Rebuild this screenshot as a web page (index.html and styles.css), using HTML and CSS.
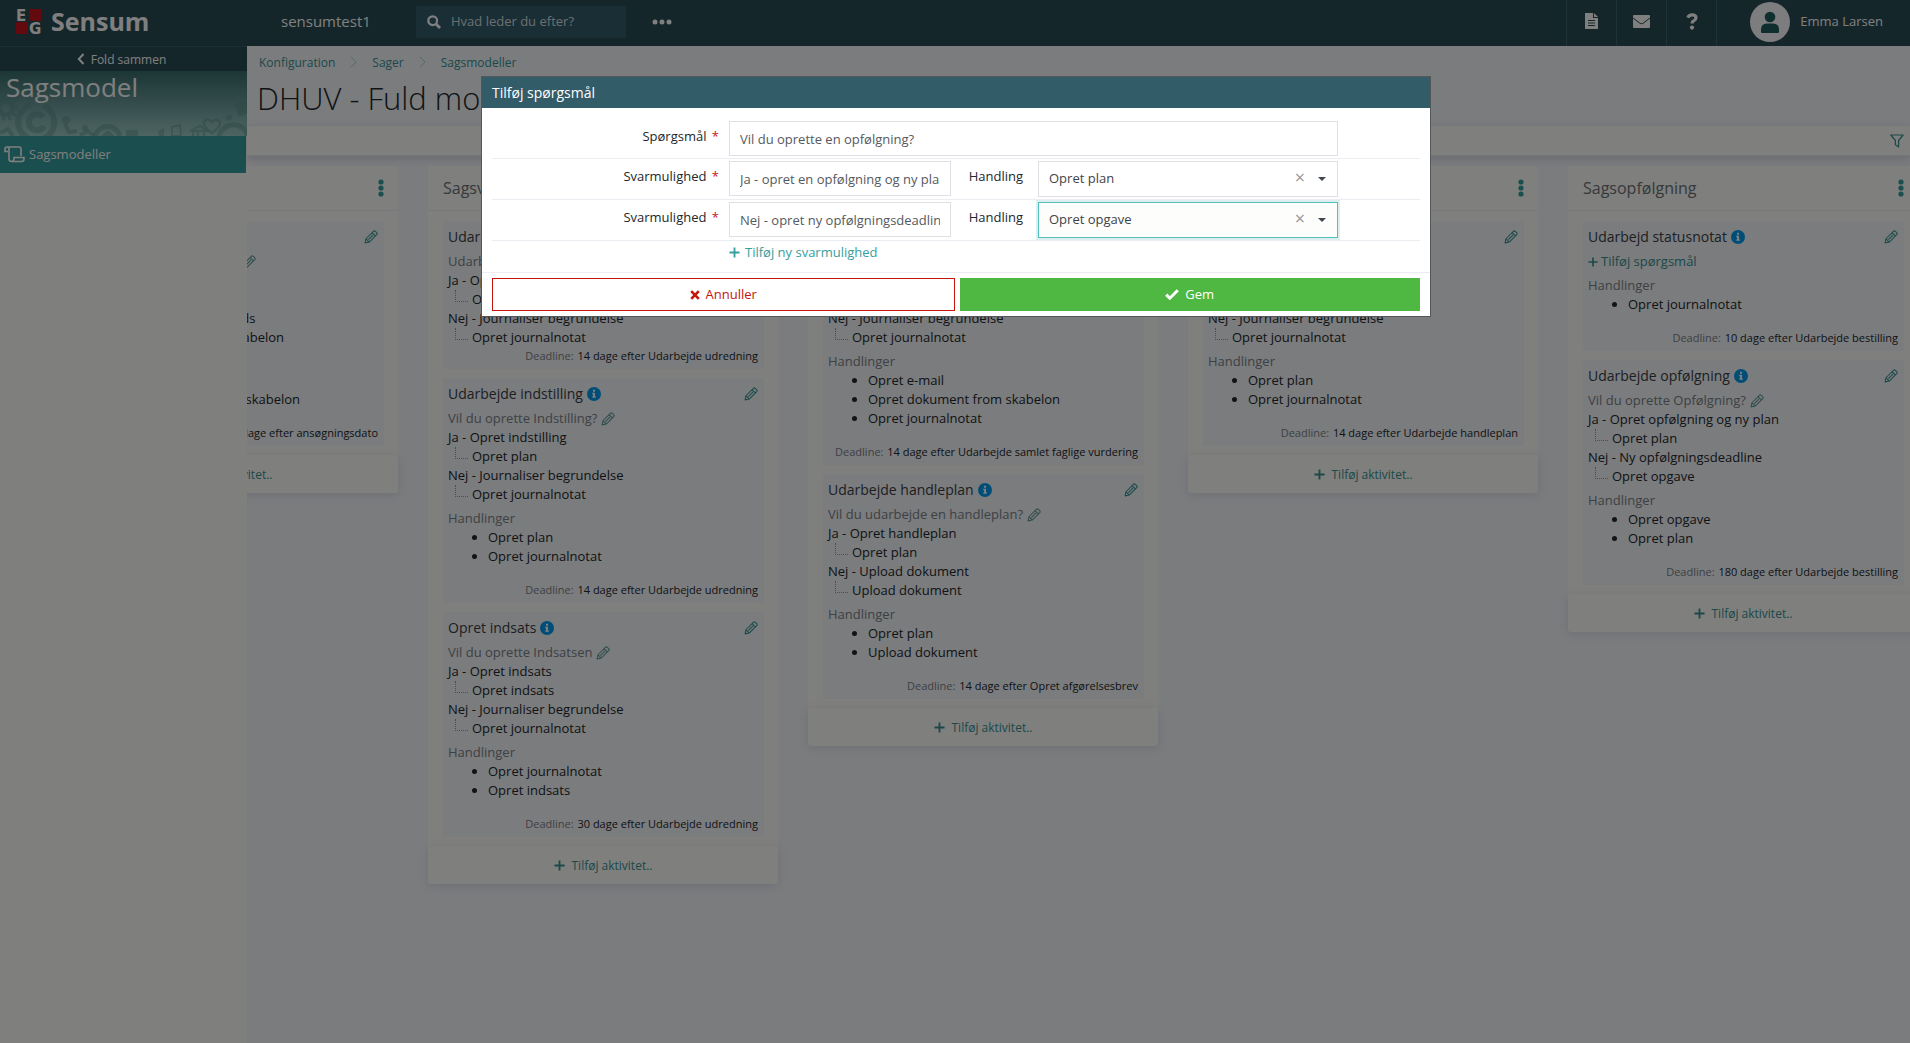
FILE: index.html
```html
<!DOCTYPE html>
<html lang="da">

<head>
    <meta charset="UTF-8">
    <meta name="viewport" content="width=device-width, initial-scale=1.0">
    <title>Sensum - Sagsmodel</title>
    <link rel="stylesheet" href="styles.css">
</head>

<body>
    <svg class="symbols" aria-hidden="true">
        <symbol id="pencil" viewBox="0 0 16 16">
            <path d="M1.3 14.7l.9-4.7 8.5-8.5a1.6 1.6 0 0 1 2.2 0l1.6 1.6a1.6 1.6 0 0 1 0 2.2L6 13.8zM9.2 3l3.8 3.8M2.4 10.2l3.4 3.4M5 11l5.4-5.4" fill="none" stroke="currentColor" stroke-width="1.2" stroke-linejoin="round" />
        </symbol>
        <symbol id="info" viewBox="0 0 16 16">
            <circle cx="8" cy="8" r="8" fill="#009bf0" />
            <path d="M6.9 3.2h2.3v2.2H6.9zM6 6.6h3.2v4.2h.9v1.6H6v-1.6h.9V8.2H6z" fill="#fff" />
        </symbol>
        <symbol id="plus" viewBox="0 0 12 12">
            <path d="M6 .5v11M.5 6h11" fill="none" stroke="currentColor" stroke-width="2" />
        </symbol>
        <symbol id="dots" viewBox="0 0 6 18">
            <circle cx="3" cy="3" r="2.6" /><circle cx="3" cy="9" r="2.6" /><circle cx="3" cy="15" r="2.6" />
        </symbol>
        <symbol id="chevron" viewBox="0 0 8 14">
            <path d="M1 1l6 6-6 6" fill="none" stroke="currentColor" />
        </symbol>
    </svg>

    <header class="topbar">
        <a href="#" class="brand">
            <svg class="brand-logo" viewBox="0 0 25 25" aria-hidden="true">
                <rect x="13" width="12" height="12" rx="1" fill="#c4141c" />
                <rect y="13" width="12" height="12" rx="1" fill="#c4141c" />
                <text x="0" y="12">E</text>
                <text x="13" y="25">G</text>
            </svg>
            Sensum
        </a>
        <span class="tenant">sensumtest1</span>
        <label class="search">
            <svg viewBox="0 0 14 14" aria-hidden="true"><circle cx="5.7" cy="5.7" r="4.4" fill="none" stroke="currentColor" stroke-width="2.2" /><path d="M9 9l4 4" stroke="currentColor" stroke-width="2.8" /></svg>
            <input type="search" placeholder="Hvad leder du efter?" aria-label="Søg">
        </label>
        <button class="more" aria-label="Mere">
            <svg viewBox="0 0 20 6" aria-hidden="true"><circle cx="3" cy="3" r="2.5" /><circle cx="10" cy="3" r="2.5" /><circle cx="17" cy="3" r="2.5" /></svg>
        </button>
        <nav class="tools">
            <a href="#" aria-label="Dokumenter">
                <svg width="13" height="16" viewBox="0 0 13 16"><path d="M0 0h8v5h5v11H0zM9 0l4 4H9z" fill="currentColor" /><path d="M3 7.5h7M3 10h7M3 12.5h7" stroke="#2a4c54" /></svg>
            </a>
            <a href="#" aria-label="Beskeder">
                <svg width="17" height="13" viewBox="0 0 17 13"><rect width="17" height="13" rx="1" fill="currentColor" /><path d="M0 3l7 5.3q1.5 1 3 0L17 3" fill="none" stroke="#2a4c54" /></svg>
            </a>
            <a href="#" aria-label="Hjælp">
                <svg width="12" height="17" viewBox="0 0 12 17"><path d="M1.8 4.6Q3 1.8 6 1.8q4 0 4 3 0 1.7-2 2.8-2 1-2 3" fill="none" stroke="currentColor" stroke-width="3.2" /><circle cx="6" cy="14.6" r="2.1" fill="currentColor" /></svg>
            </a>
        </nav>
        <a href="#" class="user">
            <svg class="avatar" viewBox="0 0 40 40" aria-hidden="true">
                <circle cx="20" cy="20" r="20" fill="#fbfbff" />
                <circle cx="20" cy="15" r="5.3" fill="#1f5f5d" />
                <path d="M11 30v-2.500q0-6 6-6h6q6 0 6 6V30q0 1-1 1H12q-1 0-1-1z" fill="#1f5f5d" />
            </svg>
            Emma Larsen
        </a>
    </header>

    <div class="layout">
        <aside class="sidebar">
            <button class="fold">
                <svg width="8" height="12" viewBox="0 0 8 12" aria-hidden="true"><path d="M6.500 1L1.800 6l4.700 5" fill="none" stroke="currentColor" stroke-width="2" /></svg>
                Fold sammen
            </button>
            <div class="banner">
                <svg class="banner-art" viewBox="0 0 247 65" preserveAspectRatio="xMinYMax slice" aria-hidden="true">
                    <g fill="none" stroke="#568d88" stroke-opacity=".4">
                        <circle cx="6" cy="37" r="7" stroke-width="5" />
                        <circle cx="6" cy="37" r="11" stroke-width="3" stroke-dasharray="3 3" />
                        <circle cx="1" cy="21" r="2" stroke-width="1" />
                        <path d="M44 35a18 18 0 1 1-13-1M43 46a8 8 0 1 0 1 9" stroke-width="6" />
                        <path d="M0 62l8-4 5 7M65 53l4 8 8-1M80 64l8-4 6 5" stroke-width="4" />
                        <path d="M95 65a13 13 0 0 1 25 0" stroke-width="5" />
                        <path d="M219 65a15 15 0 0 1 29 0" stroke-width="5" />
                        <path d="M212 62q-9-6-8-11 3-5 8 0 5-5 8 0 1 5-8 11z" stroke-width="2.500" />
                        <path d="M190 60l10-5 7 5zM193 61v4M198 61v4M204 61v4M172 56l8-2 1 11h-9z" stroke-width="2" />
                    </g>
                    <g fill="#568d88" fill-opacity=".4">
                        <circle cx="66" cy="49" r="4" /><circle cx="85" cy="57" r="3" />
                        <path d="M126 59h12v6h-12zM234 33l13-4v14l-8 3zM225 46l6-3 1 5-5 2zM158 60l6-3v8h-5zM101 65l7-6 7 6z" />
                    </g>
                </svg>
                <h2>Sagsmodel</h2>
            </div>
            <a href="#" class="nav-item">
                <svg width="21" height="17" viewBox="0 0 21 17" aria-hidden="true"><path d="M4 5.500H1V3a2 2 0 0 1 2-2h12q2 0 2 2v7M3 1q2 0 2 2v10q0 2.500 3 2.500h9.500q2.500 0 2.500-2.500v-1.500H10V13q0 2-2 2.500" fill="none" stroke="currentColor" stroke-width="1.600" /></svg>
                Sagsmodeller
            </a>
        </aside>

        <main class="content">
            <nav class="breadcrumb">
                <a href="#">Konfiguration</a>
                <svg><use href="#chevron" /></svg>
                <a href="#">Sager</a>
                <svg><use href="#chevron" /></svg>
                <a href="#">Sagsmodeller</a>
            </nav>
            <h1>DHUV - Fuld model</h1>
            <div class="filterbar">
                <button aria-label="Filter">
                    <svg width="14" height="14" viewBox="0 0 14 14"><path d="M.8 1h12.400L8.600 6.500V13L5.400 10.800V6.500z" fill="none" stroke="currentColor" stroke-width="1.200" stroke-linejoin="round" /></svg>
                </button>
            </div>

            <div class="board">
                <section class="column">
                    <header><h2>Sagsåbning</h2><button class="menu" aria-label="Menu"><svg><use href="#dots" /></svg></button></header>
                    <article class="card">
                        <h3>Ansøgning <svg><use href="#info" /></svg><button class="edit" aria-label="Rediger"><svg><use href="#pencil" /></svg></button></h3>
                        <p class="question">Vil du oprette Ansøgningen? <svg><use href="#pencil" /></svg></p>
                        <dl>
                            <dt>Ja - Opret ansøgning</dt>
                            <dd>Opret plan</dd>
                            <dt>Nej - Journaliser afslag til fonds</dt>
                            <dd>Opret dokument from skabelon</dd>
                        </dl>
                        <h4>Handlinger</h4>
                        <ul>
                            <li>Opret plan</li>
                            <li>Opret dokument from skabelon</li>
                        </ul>
                        <p class="deadline"><span>Deadline:</span> 14 dage efter ansøgningsdato</p>
                    </article>
                    <button class="add"><svg><use href="#plus" /></svg>Tilføj aktivitet..</button>
                </section>

                <section class="column">
                    <header><h2>Sagsvurdering</h2><button class="menu" aria-label="Menu"><svg><use href="#dots" /></svg></button></header>
                    <article class="card">
                        <h3>Udarbejde udredning <svg><use href="#info" /></svg><button class="edit" aria-label="Rediger"><svg><use href="#pencil" /></svg></button></h3>
                        <p class="question">Udarbejde udredning? <svg><use href="#pencil" /></svg></p>
                        <dl>
                            <dt>Ja - Opret udredning</dt>
                            <dd>Opret plan</dd>
                            <dt>Nej - Journaliser begrundelse</dt>
                            <dd>Opret journalnotat</dd>
                        </dl>
                        <p class="deadline"><span>Deadline:</span> 14 dage efter Udarbejde udredning</p>
                    </article>
                    <article class="card">
                        <h3>Udarbejde indstilling <svg><use href="#info" /></svg><button class="edit" aria-label="Rediger"><svg><use href="#pencil" /></svg></button></h3>
                        <p class="question">Vil du oprette Indstilling? <svg><use href="#pencil" /></svg></p>
                        <dl>
                            <dt>Ja - Opret indstilling</dt>
                            <dd>Opret plan</dd>
                            <dt>Nej - Journaliser begrundelse</dt>
                            <dd>Opret journalnotat</dd>
                        </dl>
                        <h4>Handlinger</h4>
                        <ul>
                            <li>Opret plan</li>
                            <li>Opret journalnotat</li>
                        </ul>
                        <p class="deadline"><span>Deadline:</span> 14 dage efter Udarbejde udredning</p>
                    </article>
                    <article class="card">
                        <h3>Opret indsats <svg><use href="#info" /></svg><button class="edit" aria-label="Rediger"><svg><use href="#pencil" /></svg></button></h3>
                        <p class="question">Vil du oprette Indsatsen <svg><use href="#pencil" /></svg></p>
                        <dl>
                            <dt>Ja - Opret indsats</dt>
                            <dd>Opret indsats</dd>
                            <dt>Nej - Journaliser begrundelse</dt>
                            <dd>Opret journalnotat</dd>
                        </dl>
                        <h4>Handlinger</h4>
                        <ul>
                            <li>Opret journalnotat</li>
                            <li>Opret indsats</li>
                        </ul>
                        <p class="deadline"><span>Deadline:</span> 30 dage efter Udarbejde udredning</p>
                    </article>
                    <button class="add"><svg><use href="#plus" /></svg>Tilføj aktivitet..</button>
                </section>

                <section class="column">
                    <header><h2>Afgørelse</h2><button class="menu" aria-label="Menu"><svg><use href="#dots" /></svg></button></header>
                    <article class="card">
                        <h3>Opret afgørelsesbrev <svg><use href="#info" /></svg><button class="edit" aria-label="Rediger"><svg><use href="#pencil" /></svg></button></h3>
                        <p class="question">Vil du oprette afgørelse? <svg><use href="#pencil" /></svg></p>
                        <dl>
                            <dt>Ja - Opret afgørelse</dt>
                            <dd>Opret plan</dd>
                            <dt>Nej - Journaliser begrundelse</dt>
                            <dd>Opret journalnotat</dd>
                        </dl>
                        <h4>Handlinger</h4>
                        <ul>
                            <li>Opret e-mail</li>
                            <li>Opret dokument from skabelon</li>
                            <li>Opret journalnotat</li>
                        </ul>
                        <p class="deadline"><span>Deadline:</span> 14 dage efter Udarbejde samlet faglige vurdering</p>
                    </article>
                    <article class="card">
                        <h3>Udarbejde handleplan <svg><use href="#info" /></svg><button class="edit" aria-label="Rediger"><svg><use href="#pencil" /></svg></button></h3>
                        <p class="question">Vil du udarbejde en handleplan? <svg><use href="#pencil" /></svg></p>
                        <dl>
                            <dt>Ja - Opret handleplan</dt>
                            <dd>Opret plan</dd>
                            <dt>Nej - Upload dokument</dt>
                            <dd>Upload dokument</dd>
                        </dl>
                        <h4>Handlinger</h4>
                        <ul>
                            <li>Opret plan</li>
                            <li>Upload dokument</li>
                        </ul>
                        <p class="deadline"><span>Deadline:</span> 14 dage efter Opret afgørelsesbrev</p>
                    </article>
                    <button class="add"><svg><use href="#plus" /></svg>Tilføj aktivitet..</button>
                </section>

                <section class="column">
                    <header><h2>Bestilling</h2><button class="menu" aria-label="Menu"><svg><use href="#dots" /></svg></button></header>
                    <article class="card">
                        <h3>Udarbejde bestilling <svg><use href="#info" /></svg><button class="edit" aria-label="Rediger"><svg><use href="#pencil" /></svg></button></h3>
                        <p class="question">Vil du oprette bestilling? <svg><use href="#pencil" /></svg></p>
                        <dl>
                            <dt>Ja - Opret bestilling</dt>
                            <dd>Opret plan</dd>
                            <dt>Nej - Journaliser begrundelse</dt>
                            <dd>Opret journalnotat</dd>
                        </dl>
                        <h4>Handlinger</h4>
                        <ul>
                            <li>Opret plan</li>
                            <li>Opret journalnotat</li>
                        </ul>
                        <p class="deadline"><span>Deadline:</span> 14 dage efter Udarbejde handleplan</p>
                    </article>
                    <button class="add"><svg><use href="#plus" /></svg>Tilføj aktivitet..</button>
                </section>

                <section class="column">
                    <header><h2>Sagsopfølgning</h2><button class="menu" aria-label="Menu"><svg><use href="#dots" /></svg></button></header>
                    <article class="card">
                        <h3>Udarbejd statusnotat <svg><use href="#info" /></svg><button class="edit" aria-label="Rediger"><svg><use href="#pencil" /></svg></button></h3>
                        <button class="add-question"><svg><use href="#plus" /></svg>Tilføj spørgsmål</button>
                        <h4>Handlinger</h4>
                        <ul>
                            <li>Opret journalnotat</li>
                        </ul>
                        <p class="deadline"><span>Deadline:</span> 10 dage efter Udarbejde bestilling</p>
                    </article>
                    <article class="card">
                        <h3>Udarbejde opfølgning <svg><use href="#info" /></svg><button class="edit" aria-label="Rediger"><svg><use href="#pencil" /></svg></button></h3>
                        <p class="question">Vil du oprette Opfølgning? <svg><use href="#pencil" /></svg></p>
                        <dl>
                            <dt>Ja - Opret opfølgning og ny plan</dt>
                            <dd>Opret plan</dd>
                            <dt>Nej - Ny opfølgningsdeadline</dt>
                            <dd>Opret opgave</dd>
                        </dl>
                        <h4>Handlinger</h4>
                        <ul>
                            <li>Opret opgave</li>
                            <li>Opret plan</li>
                        </ul>
                        <p class="deadline"><span>Deadline:</span> 180 dage efter Udarbejde bestilling</p>
                    </article>
                    <button class="add"><svg><use href="#plus" /></svg>Tilføj aktivitet..</button>
                </section>
            </div>
        </main>
    </div>

    <div class="backdrop">
        <form class="modal" role="dialog" aria-labelledby="modal-title">
            <h2 id="modal-title">Tilføj spørgsmål</h2>
            <div class="modal-body">
                <div class="form-row">
                    <label for="question">Spørgsmål <b>*</b></label>
                    <input id="question" class="wide" type="text" value="Vil du oprette en opfølgning?">
                </div>
                <div class="form-row">
                    <label for="answer1">Svarmulighed <b>*</b></label>
                    <input id="answer1" type="text" value="Ja - opret en opfølgning og ny plan">
                    <label for="action1">Handling</label>
                    <div class="select">
                        <select id="action1"><option>Opret plan</option><option>Opret opgave</option></select>
                        <button type="button" class="clear" aria-label="Ryd">×</button>
                    </div>
                </div>
                <div class="form-row">
                    <label for="answer2">Svarmulighed <b>*</b></label>
                    <input id="answer2" type="text" value="Nej - opret ny opfølgningsdeadline">
                    <label for="action2">Handling</label>
                    <div class="select active">
                        <select id="action2"><option>Opret opgave</option><option>Opret plan</option></select>
                        <button type="button" class="clear" aria-label="Ryd">×</button>
                    </div>
                </div>
                <div class="form-row">
                    <button type="button" class="add-answer"><svg><use href="#plus" /></svg>Tilføj ny svarmulighed</button>
                </div>
            </div>
            <div class="modal-footer">
                <button type="button" class="cancel"><svg width="10" height="10" viewBox="0 0 10 10" aria-hidden="true"><path d="M1.200 1.200l7.600 7.600M8.800 1.200L1.200 8.800" stroke="currentColor" stroke-width="2.600" /></svg>Annuller</button>
                <button type="submit" class="save"><svg width="14" height="11" viewBox="0 0 14 11" aria-hidden="true"><path d="M1.200 5.600l3.600 3.600 8-8" fill="none" stroke="currentColor" stroke-width="3" /></svg>Gem</button>
            </div>
        </form>
    </div>

    <script>
        // start with the last column in view
        const board = document.querySelector('.board');
        board.scrollLeft = 214;
    </script>
</body>

</html>
```
FILE: styles.css
```css
* {
    box-sizing: border-box;
}

body {
    display: flex;
    flex-direction: column;
    min-height: 100vh;
    margin: 0;
    font-family: "Open Sans", sans-serif;
    font-size: 13px;
    line-height: 19px;
    color: #22272b;
    background: #f6f8fc;
}

h1, h2, h3, h4, p, ul, dl, dd {
    margin: 0;
    padding: 0;
    font-weight: 400;
}

a {
    color: inherit;
    text-decoration: none;
}

button {
    padding: 0;
    border: 0;
    background: none;
    font: inherit;
    color: inherit;
    cursor: pointer;
}

input, select {
    font: inherit;
}

svg {
    flex: none;
}

.symbols {
    display: none;
}

/* top bar */

.topbar {
    display: flex;
    align-items: center;
    height: 46px;
    padding-bottom: 3px;
    background: #2a4c54;
    color: #fff;
}

.brand {
    display: flex;
    align-items: center;
    gap: 10px;
    width: 281px;
    padding-left: 16px;
    font-size: 25px;
    font-weight: 700;
}

.brand-logo {
    width: 25px;
    height: 25px;
    overflow: visible;
    fill: #fff;
    font-family: "DejaVu Sans", sans-serif;
    font-size: 15px;
}

.tenant {
    width: 135px;
    font-size: 15px;
}

.search {
    display: flex;
    align-items: center;
    gap: 10px;
    width: 210px;
    height: 32px;
    padding: 0 11px;
    background: #355c6a;
}

.search svg {
    width: 14px;
    height: 14px;
}

.search input {
    flex: 1;
    min-width: 0;
    border: 0;
    background: none;
    color: #fff;
    outline: 0;
    padding: 0;
}

.search input::placeholder {
    color: #d5dfe2;
}

.more {
    display: flex;
    margin-left: 26px;
}

.more svg {
    width: 20px;
    height: 6px;
    fill: currentColor;
}

.tools {
    display: flex;
    align-self: stretch;
    margin: 0 0 -3px auto;
    border-right: 1px solid #3a6373;
}

.tools a {
    display: flex;
    align-items: center;
    justify-content: center;
    width: 50px;
    padding-bottom: 4px;
    border-left: 1px solid #3a6373;
}

.user {
    display: flex;
    align-items: center;
    gap: 10px;
    padding: 0 27px 0 33px;
    white-space: nowrap;
}

.avatar {
    width: 40px;
    height: 40px;
}

/* sidebar */

.layout {
    display: flex;
    flex: 1;
}

.sidebar {
    width: 247px;
    flex: none;
    background: #fffefa;
}

.fold {
    display: flex;
    align-items: center;
    justify-content: center;
    gap: 6px;
    width: 100%;
    height: 25px;
    padding-right: 4px;
    border-top: 1px solid #355c6a;
    background: #2a4c54;
    color: #fff;
    font-size: 12px;
}

.banner {
    position: relative;
    height: 65px;
    background: linear-gradient(#386d6d, #9bc9c4);
    color: #fff;
}

.banner-art {
    position: absolute;
    inset: 0;
    width: 100%;
    height: 100%;
}

.banner h2 {
    position: relative;
    padding-left: 6px;
    font-size: 26px;
    line-height: 32px;
}

.nav-item {
    display: flex;
    align-items: center;
    gap: 4px;
    height: 37px;
    margin-right: 1px;
    padding-left: 4px;
    background: #379d9d;
    color: #fff;
}

/* page head */

.content {
    flex: 1;
    min-width: 0;
}

.breadcrumb {
    display: flex;
    align-items: center;
    height: 32px;
    padding-left: 12px;
    font-size: 12px;
    color: #379393;
}

.breadcrumb svg {
    width: 7px;
    height: 12px;
    margin: 0 15px;
    color: #9bcccc;
}

h1 {
    padding-left: 10px;
    font-size: 31px;
    font-weight: 300;
    line-height: 40px;
    height: 47px;
}

.filterbar {
    position: relative;
    display: flex;
    align-items: center;
    justify-content: flex-end;
    height: 31px;
    padding-right: 6px;
    border: 1px solid #ebeef5;
    border-width: 1px 0;
    background: #fffefa;
    color: #379393;
    box-shadow: 0 3px 8px rgba(80, 90, 130, .2);
}

.filterbar button {
    display: flex;
}

/* board */

.board {
    display: flex;
    align-items: flex-start;
    gap: 30px;
    padding: 10px 15px 15px;
    overflow-x: auto;
    scrollbar-width: none;
}

.column {
    flex: 0 0 350px;
    border-radius: 3px;
    background: #fffefa;
}

.column header {
    display: flex;
    align-items: center;
    justify-content: space-between;
    height: 45px;
    margin-bottom: 10px;
    padding: 0 14px 0 15px;
    border-bottom: 1px solid #eef0f6;
    color: #6b7278;
}

.column h2 {
    font-size: 16px;
    line-height: 24px;
}

.menu {
    display: flex;
}

.menu svg {
    width: 6px;
    height: 18px;
    fill: #379d9d;
}

.card {
    margin: 0 14px 9px 15px;
    padding: 0 6px 5px 5px;
    border-radius: 2px;
    background: #f6f8fd;
}

.card h3 {
    display: flex;
    align-items: center;
    gap: 4px;
    height: 31px;
    font-size: 14px;
    color: #3a4045;
}

.card h3 > svg,
.edit svg {
    width: 14px;
    height: 14px;
}

.edit {
    display: flex;
    margin-left: auto;
    color: #379393;
}

.question {
    display: flex;
    align-items: center;
    gap: 4px;
    height: 19px;
    color: #7c8286;
}

.question svg {
    width: 14px;
    height: 14px;
    color: #5f9a98;
}

.card dd {
    position: relative;
    padding-left: 24px;
}

/* dotted elbow in front of each action */
.card dd::before {
    content: "";
    position: absolute;
    left: 7px;
    top: 0;
    width: 12px;
    height: 11px;
    border: dotted #969ba0;
    border-width: 0 0 1px 1px;
}

.card h4 {
    margin-top: 5px;
    font-size: 13px;
    color: #7c8286;
}

.card ul {
    margin-bottom: 15px;
    padding-left: 40px;
}

.deadline {
    font-size: 11px;
    line-height: 17px;
    text-align: right;
}

.deadline span {
    margin-right: 1px;
    color: #7c8286;
}

.add-question {
    display: flex;
    align-items: center;
    gap: 3px;
    color: #379393;
}

.add-question svg {
    width: 10px;
    height: 10px;
}

.add {
    display: flex;
    align-items: center;
    justify-content: center;
    gap: 7px;
    width: 100%;
    height: 38px;
    border-radius: 3px;
    color: #379393;
    font-size: 12px;
    box-shadow: 0 2px 10px rgba(80, 90, 130, .15);
}

.add svg,
.add-answer svg {
    width: 11px;
    height: 11px;
}

/* modal */

.backdrop {
    position: fixed;
    inset: 0;
    padding: 76px 0 0 2px;
    background: rgba(0, 0, 0, .5);
}

.modal {
    width: 950px;
    max-width: 100%;
    margin: 0 auto;
    border: 1px solid #55585b;
    background: #fff;
}

.modal h2 {
    padding: 0 10px;
    font-size: 14px;
    font-weight: 500;
    line-height: 31px;
    background: #335c69;
    color: #fff;
}

.modal-body {
    padding: 13px 10px 0;
}

.form-row {
    display: grid;
    grid-template-columns: 237fr 222fr 87fr 300fr 82fr;
    align-items: start;
    padding-bottom: 2px;
    margin-bottom: 2px;
    border-bottom: 1px solid #ebedf2;
}

.form-row label {
    padding: 6px 10px 0 0;
    font-weight: 500;
    text-align: right;
}

.form-row label + input ~ label {
    padding-right: 15px;
}

.form-row b {
    margin-left: 2px;
    font-weight: 500;
    color: #c4161c;
}

.form-row input,
.select select {
    width: 100%;
    min-width: 0;
    height: 35px;
    padding: 0 10px;
    border: 1px solid #dde1e6;
    border-radius: 0;
    background: #fff;
    color: #55595e;
    outline: 0;
}

.form-row .wide {
    grid-column: 2 / 5;
}

.select {
    position: relative;
}

.select select {
    display: block;
    height: 36px;
    padding-bottom: 2px;
    appearance: none;
    color: #3f4347;
}

.select.active select {
    border-color: #53c2bf;
    background: #fdfdfb;
    box-shadow: 0 0 0 2px #dceeee;
}

/* caret */
.select::after {
    content: "";
    position: absolute;
    right: 12px;
    top: 16px;
    border: 4px solid transparent;
    border-top-color: #3f4650;
    border-bottom: 0;
    pointer-events: none;
}

.clear {
    position: absolute;
    right: 33px;
    top: 7px;
    font-size: 18px;
    color: #999;
}

.form-row:last-child {
    border: 0;
    margin: 0;
    padding: 0 0 10px;
}

.add-answer {
    display: flex;
    grid-column: 2 / 5;
    align-items: center;
    gap: 5px;
    color: #379d9d;
}

.modal-footer {
    display: flex;
    gap: 5px;
    padding: 5px 10px;
    border-top: 1px solid #ebedf2;
}

.modal-footer button {
    display: flex;
    flex: 1;
    align-items: center;
    justify-content: center;
    gap: 6px;
    height: 33px;
}

.modal-footer .cancel {
    border: 1px solid #c4160a;
    color: #c4160a;
}

.modal-footer .save {
    background: #4eb843;
    color: #fff;
    font-weight: 500;
}
```
